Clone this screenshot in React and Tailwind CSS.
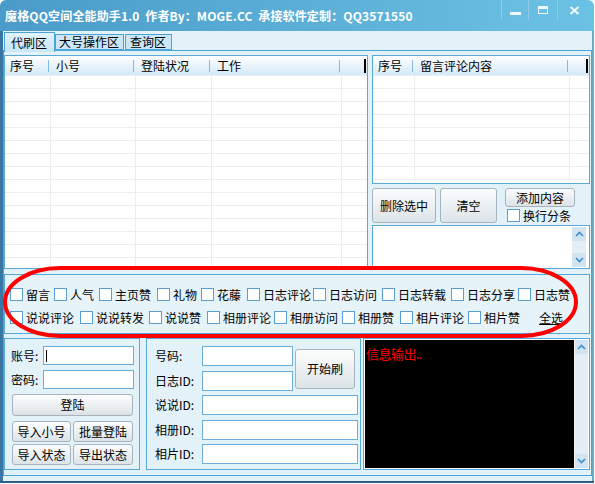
import React from 'react';

const leftCols = [
  { label: '序号', w: 'w-[46px]' },
  { label: '小号', w: 'w-[85px]' },
  { label: '登陆状况', w: 'w-[76px]' },
  { label: '工作', w: 'w-[130px]' },
];

const rightCols = [
  { label: '序号', w: 'w-[42px]' },
  { label: '留言评论内容', w: 'w-[155px]' },
];

const row1 = [
  { label: '留言', w: 'w-[44px]' },
  { label: '人气', w: 'w-[45px]' },
  { label: '主页赞', w: 'w-[58px]' },
  { label: '礼物', w: 'w-[44px]' },
  { label: '花藤', w: 'w-[46px]' },
  { label: '日志评论', w: 'w-[66px]' },
  { label: '日志访问', w: 'w-[69px]' },
  { label: '日志转载', w: 'w-[69px]' },
  { label: '日志分享', w: 'w-[67px]' },
  { label: '日志赞', w: 'w-[60px]' },
];

const row2 = [
  { label: '说说评论', w: 'w-[70px]' },
  { label: '说说转发', w: 'w-[69px]' },
  { label: '说说赞', w: 'w-[58px]' },
  { label: '相册评论', w: 'w-[67px]' },
  { label: '相册访问', w: 'w-[68px]' },
  { label: '相册赞', w: 'w-[58px]' },
  { label: '相片评论', w: 'w-[68px]' },
  { label: '相片赞', w: 'w-[71px]' },
];

const Btn = ({ className = '', children }) => (
  <div className={`flex items-center justify-center border border-[#a7b4bd] rounded-[3px] bg-linear-to-b from-[#fcfdfd] to-[#dce3e7] text-[12px] text-black shrink-0 ${className}`}>
    {children}
  </div>
);

const Box = () => (
  <span className="inline-block w-[13px] h-[13px] border border-[#5a9fd3] bg-white shrink-0" />
);

const Check = ({ label, w }) => (
  <div className={`flex items-center gap-[3px] shrink-0 ${w}`}>
    <Box />
    <span className="text-[12px] leading-[13px] whitespace-nowrap">{label}</span>
  </div>
);

const Input = ({ className = '', children }) => (
  <div className={`border border-[#6aaedc] bg-white shrink-0 flex items-center ${className}`}>{children}</div>
);

const Arrow = ({ up }) => (
  <div className="h-[14px] bg-[#d2e4ef] flex items-center justify-center">
    <svg width="9" height="6" viewBox="0 0 9 6">
      <path d={up ? 'M1 5 L4.5 1.5 L8 5' : 'M1 1 L4.5 4.5 L8 1'} stroke="#3d8ed2" strokeWidth="1.6" fill="none" />
    </svg>
  </div>
);

const ScrollBar = ({ className = '' }) => (
  <div className={`w-[14px] flex flex-col justify-between bg-[#e5eef4] ${className}`}>
    <Arrow up />
    <Arrow />
  </div>
);

const ListView = ({ cols, rows, className = '' }) => (
  <div className={`border border-[#5aa8d8] bg-white overflow-hidden flex flex-col ${className}`}>
    <div className="flex h-[20px] shrink-0 bg-linear-to-b from-white to-[#d4e9f8] border-b border-[#e9f1f7]">
      {cols.map((c, i) => (
        <div key={i} className={`${c.w} shrink-0 relative flex items-center pl-[5px] text-[12px]`}>
          {c.label}
          <span className="absolute right-[2px] top-[4px] h-[12px] w-px bg-[#85bbe3]" />
        </div>
      ))}
      <div className="flex-1 flex items-center justify-end pr-[1px]">
        <span className="w-[2px] h-[14px] bg-black" />
      </div>
    </div>
    {Array.from({ length: rows }).map((_, r) => (
      <div key={r} className="flex h-[13px] shrink-0 border-b border-[#ececec]">
        {cols.map((c, i) => (
          <div key={i} className={`${c.w} shrink-0 border-r border-[#ececec]`} />
        ))}
        <div className="flex-1" />
      </div>
    ))}
  </div>
);

const App = () => {
  return (
    <div className="w-[595px] h-[484px] bg-white relative overflow-hidden font-[Noto_Sans_CJK_SC,sans-serif] text-black">
      <div className="w-[594px] h-[483px] flex flex-col rounded-t-[6px] overflow-hidden bg-[#e3f1f8] border-b-[2px] border-[#2f5f82]">
        {/* 标题栏 */}
        <div className="h-[31px] shrink-0 relative bg-linear-to-r from-[#4a9bc9] to-[#6cc2e4] flex items-center pl-[5px]">
          <span className="text-white font-bold text-[12px] whitespace-pre tracking-[0.15px]">
            魔格QQ空间全能助手1.0  作者By：MOGE.CC  承接软件定制：QQ3571550
          </span>
          <div className="absolute right-[4px] top-0 h-[20px] flex">
            <div className="w-[27px] h-full border-l border-[#8fcbe6] flex items-center justify-center">
              <span className="w-[11px] h-[3px] bg-[#eef7fb] mt-[6px]" />
            </div>
            <div className="w-[29px] h-full border-l border-[#8fcbe6] flex items-center justify-center">
              <span className="w-[10px] h-[8px] border-[1.5px] border-t-[3px] border-[#eef7fb]" />
            </div>
            <div className="w-[33px] h-full border-l border-[#8fcbe6] flex items-center justify-center">
              <svg width="11" height="9" viewBox="0 0 11 9">
                <path d="M1.5 1 L9.5 8 M9.5 1 L1.5 8" stroke="#eef7fb" strokeWidth="2.2" />
              </svg>
            </div>
          </div>
        </div>

        <div className="flex-1 flex flex-col border-l-[3px] border-l-[#3a76a4] border-r-[2px] border-r-[#6aa9cf]">
          {/* 选项卡 */}
          <div className="h-[19px] shrink-0 flex items-end pl-[1px] relative z-10">
            <div className="w-[51px] h-[20px] -mb-[2px] border border-b-0 border-[#4aa4d8] bg-linear-to-b from-[#e2f3fc] to-[#c9e7f8] text-[12px] flex items-center pl-[6px]">
              代刷区
            </div>
            <div className="w-[69px] h-[16px] border border-[#4aa4d8] bg-[#cbe7f7] text-[12px] flex items-center pl-[3px]">
              大号操作区
            </div>
            <div className="w-[47px] h-[16px] ml-[1px] border border-[#4aa4d8] bg-[#cbe7f7] text-[12px] flex items-center pl-[4px]">
              查询区
            </div>
          </div>

          {/* 面板 */}
          <div className="h-[426px] shrink-0 border border-[#4ca5d8] pt-[4px] pr-[1px] flex flex-col">
            <div className="flex h-[214px] shrink-0">
              <ListView cols={leftCols} rows={15} className="w-[364px] h-[214px]" />
              <div className="w-[218px] ml-[4px] flex flex-col">
                <ListView cols={rightCols} rows={8} className="h-[129px]" />
                <div className="flex mt-[4px] h-[35px]">
                  <Btn className="w-[64px] h-[35px]">删除选中</Btn>
                  <Btn className="w-[57px] h-[35px] ml-[4px]">清空</Btn>
                  <div className="ml-[8px] flex flex-col">
                    <Btn className="w-[70px] h-[19px]">添加内容</Btn>
                    <div className="flex items-center gap-[3px] mt-[2px] pl-[2px]">
                      <Box />
                      <span className="text-[12px] leading-[13px]">换行分条</span>
                    </div>
                  </div>
                </div>
                <div className="mt-[2px] h-[44px] border border-[#5aa8d8] bg-white flex justify-end p-[1px] pr-[3px]">
                  <ScrollBar />
                </div>
              </div>
            </div>

            {/* 功能选项 */}
            <div className="mt-[5px] h-[60px] shrink-0 border border-[#56a9dc] bg-[#e6f3f9] flex flex-col pl-[5px] pt-[13px] gap-[10px]">
              <div className="flex h-[13px]">
                {row1.map((c) => (
                  <Check key={c.label} {...c} />
                ))}
              </div>
              <div className="flex h-[13px] items-center">
                {row2.map((c) => (
                  <Check key={c.label} {...c} />
                ))}
                <span className="text-[12px] leading-[13px] underline">全选</span>
              </div>
            </div>

            {/* 底部区域 */}
            <div className="mt-[4px] h-[133px] shrink-0 flex">
              <div className="w-[136px] h-[132px] border border-[#56a9dc] flex flex-col pl-[6px] pt-[7px]">
                <div className="flex items-center h-[19px]">
                  <span className="w-[32px] text-[12px]">账号:</span>
                  <Input className="w-[91px] h-[19px] pl-[2px]">
                    <span className="w-px h-[12px] bg-black" />
                  </Input>
                </div>
                <div className="flex items-center h-[19px] mt-[5px]">
                  <span className="w-[32px] text-[12px]">密码:</span>
                  <Input className="w-[91px] h-[19px]" />
                </div>
                <Btn className="w-[121px] h-[22px] mt-[5px] ml-[1px]">登陆</Btn>
                <div className="flex gap-[2px] mt-[5px] ml-[1px]">
                  <Btn className="w-[59px] h-[21px]">导入小号</Btn>
                  <Btn className="w-[60px] h-[21px]">批量登陆</Btn>
                </div>
                <div className="flex gap-[2px] mt-[2px] ml-[1px]">
                  <Btn className="w-[59px] h-[21px]">导入状态</Btn>
                  <Btn className="w-[60px] h-[21px]">导出状态</Btn>
                </div>
              </div>

              <div className="w-[215px] h-[132px] ml-[6px] border border-[#56a9dc] flex flex-col pl-[8px] pt-[7px]">
                <div className="flex">
                  <div className="flex flex-col">
                    <div className="flex items-center h-[20px]">
                      <span className="w-[47px] text-[12px]">号码:</span>
                      <Input className="w-[91px] h-[20px]" />
                    </div>
                    <div className="flex items-center h-[20px] mt-[5px]">
                      <span className="w-[47px] text-[12px]">日志ID:</span>
                      <Input className="w-[91px] h-[20px]" />
                    </div>
                  </div>
                  <Btn className="w-[60px] h-[40px] ml-[2px] mt-[3px]">开始刷</Btn>
                </div>
                <div className="flex items-center h-[20px] mt-[4px]">
                  <span className="w-[47px] text-[12px]">说说ID:</span>
                  <Input className="w-[156px] h-[20px]" />
                </div>
                <div className="flex items-center h-[20px] mt-[5px]">
                  <span className="w-[47px] text-[12px]">相册ID:</span>
                  <Input className="w-[156px] h-[20px]" />
                </div>
                <div className="flex items-center h-[20px] mt-[4px]">
                  <span className="w-[47px] text-[12px]">相片ID:</span>
                  <Input className="w-[156px] h-[20px]" />
                </div>
              </div>

              <div className="w-[227px] h-[132px] ml-[2px] border border-[#56a9dc] bg-white p-[1px] flex">
                <div className="flex-1 bg-black pl-[1px]">
                  <span className="text-[13px] leading-[14px] text-[#ff0000] tracking-[-0.5px]">信息输出..</span>
                </div>
                <ScrollBar className="border-l border-[#f0f4f7]" />
              </div>
            </div>
          </div>
        </div>
      </div>

      {/* 红色标注圈 */}
      <svg className="absolute left-0 top-0 pointer-events-none" width="595" height="484" viewBox="0 0 595 484">
        <rect x="5" y="268" width="571" height="68" rx="55" ry="34" fill="none" stroke="#ff0000" strokeWidth="4" />
      </svg>
    </div>
  );
};

export default App;
